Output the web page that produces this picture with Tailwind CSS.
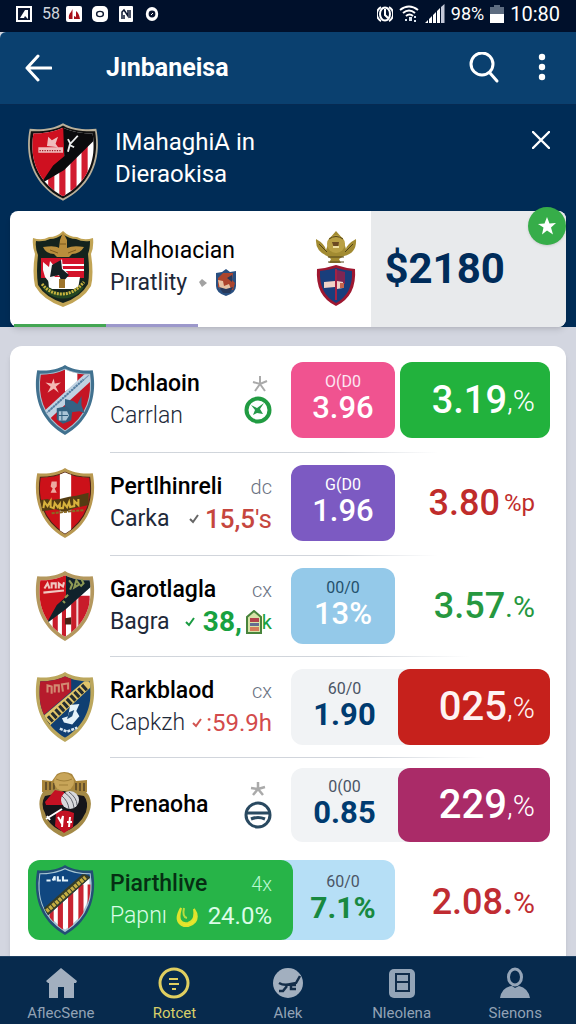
<!DOCTYPE html>
<html lang="en">
<head>
<meta charset="utf-8">
<meta name="viewport" content="width=device-width, initial-scale=1">
<title>Jınbaneisa</title>
<script src="https://cdn.jsdelivr.net/npm/@tailwindcss/browser@4"></script>
</head>
<body class="flex min-h-screen flex-col bg-[#d3d6e0] font-['Roboto','Liberation_Sans',sans-serif] text-black">

<svg class="absolute size-0" aria-hidden="true">
  <defs>
    <path id="shield" d="M30 1C38 6 48 7 57 6C61 27 57 54 30 69C3 54-1 27 3 6C12 7 22 6 30 1Z"/>
    <clipPath id="inner"><path d="M30 5C38 9 46 10 54 10C57 29 53 51 30 65C7 51 3 29 6 10C14 10 22 9 30 5Z"/></clipPath>
  </defs>
</svg>

<!-- Status bar -->
<div class="flex h-8 items-center justify-between bg-[#00102b] px-4 pb-1 text-white">
  <div class="flex items-center gap-2.5">
    <svg class="size-4" viewBox="0 0 16 16"><rect width="16" height="16" fill="#fff"/><rect x="2" y="2" width="12" height="12" fill="#0b1630"/><path d="M4 12l5-8h3v9l-3-3-1 2z" fill="#fff"/></svg>
    <span class="text-base leading-none text-gray-300">58</span>
    <svg class="-ml-1 size-4" viewBox="0 0 16 16"><rect width="16" height="16" rx="2" fill="#fff"/><path d="M6.500 3v10H3q-1-4 2-7zM8 3v7l2 1V5q3 2 4 8H8z" fill="#a80d18"/></svg>
    <svg class="size-4" viewBox="0 0 16 16"><rect width="16" height="16" rx="5" fill="#fff"/><ellipse cx="8" cy="8" rx="3.400" ry="2.600" fill="none" stroke="#111c33" stroke-width="1.400"/></svg>
    <svg class="size-4" viewBox="0 0 16 16"><rect x="1" width="14" height="16" rx="1" fill="#fff"/><path d="M4 13V6l2-2 4 6V4M12 4v8M6 9v4" fill="none" stroke="#0b1630" stroke-width="1.500"/></svg>
    <svg class="size-4" viewBox="0 0 16 16"><ellipse cx="8" cy="8" rx="6.200" ry="7" fill="#fff"/><circle cx="8" cy="8" r="3.400" fill="#0b1630"/><path d="M7 9l2-2" stroke="#fff"/></svg>
  </div>
  <div class="flex items-center gap-1.5">
    <svg class="size-4" viewBox="0 0 16 16"><path d="M4 1a8 8 0 0 0 0 14M12 1a8 8 0 0 1 0 14" fill="none" stroke="#fff" stroke-width="2"/><ellipse cx="8" cy="8" rx="5" ry="6.500" fill="none" stroke="#fff" stroke-width="2"/><path d="M8 3v6l3 3" stroke="#fff" stroke-width="2" fill="none"/></svg>
    <svg class="h-5 w-5" viewBox="0 0 20 20"><path d="M1 6q9-7 18 0M4 9q6-5 12 0M7 12q3.500-3 7 0" fill="none" stroke="#fff" stroke-width="2"/><path d="M6 15h2v2H6zM10 13h3v4h-3zM15 12h2v2h-2zM15 16h2v2h-2z" fill="#dbe4ee"/></svg>
    <svg class="h-5 w-5" viewBox="0 0 20 20"><path d="M0 19l3-3v3zM4 19v-4l3-3v7zM8 19v-8l3-3v11zM12 19V7l3-3v15z" fill="#fff"/><path d="M16 3l3.500-3v19H16z" fill="#c3c8d8"/></svg>
    <span class="text-lg leading-none">98%</span>
    <svg class="h-5 w-3.5" viewBox="0 0 14 20"><path d="M4 1h6v2h4v8H0V3h4z" fill="#5d6c80"/><path d="M0 10h14v9H0z" fill="#fff"/></svg>
    <span class="text-xl leading-none">10:80</span>
  </div>
</div>

<!-- App bar -->
<header class="flex h-[73px] items-center rounded-tl-md border-b border-[#062a52] bg-[#0a406f] px-4 text-white">
  <button class="p-2" aria-label="Back"><svg class="size-7" viewBox="0 0 28 28" fill="none" stroke="currentColor" stroke-width="3" stroke-linecap="round" stroke-linejoin="round"><path d="M27 14H3M14 2L3 14l11 12"/></svg></button>
  <h1 class="ml-[46px] flex-1 text-[25px] font-bold leading-8">Jınbaneisa</h1>
  <button class="p-1" aria-label="Search"><svg class="size-8" viewBox="0 0 32 32" fill="none" stroke="currentColor" stroke-width="3" stroke-linecap="round"><circle cx="14" cy="12" r="11"/><path d="M22 21l7 8"/></svg></button>
  <button class="ml-6 mr-1 px-2" aria-label="More options"><svg class="h-8 w-3" viewBox="0 0 12 32" fill="currentColor"><circle cx="6" cy="5" r="3.200"/><circle cx="6" cy="15" r="3.200"/><circle cx="6" cy="25" r="3.200"/></svg></button>
</header>

<!-- Club heading and balance card -->
<section class="bg-[#002c56] px-2.5">
  <div class="flex h-[106px] items-center pl-4 pr-3 text-white">
    <svg class="mt-2 h-20 w-[74px] shrink-0" viewBox="0 0 60 70" preserveAspectRatio="none">
      <use href="#shield" fill="#b9b09a"/><path d="M30 3C38 8 47 8 56 8C59 28 55 53 30 67C5 53 1 28 4 8C13 8 22 8 30 3Z" fill="#111"/>
      <g clip-path="url(#inner)"><path d="M0 0h60v70H0z" fill="#fff"/><path d="M18 30h5v40h-5zM27 30h5v40h-5zM36 20h5v40h-5zM45 15h5v40h-5z" fill="#d21c2f"/><path d="M0 0h31v38L14 52 0 40z" fill="#cf1020"/><path d="M30 0h30v11L31 42 12 54 22 38 31 30z" fill="#0b0b0d"/></g>
      <path d="M10 22h20v5H10zM17 21l1-8 3 3 5-3-2 6 2 3z" fill="#f0bcbc"/><path d="M11 25h18" stroke="#9c1522" stroke-dasharray="1 1"/><path d="M34 15l2 4 6-7M36 18l-2 8M35 20l4 2" stroke="#eee" stroke-width="1.500" fill="none"/>
    </svg>
    <div class="ml-[15px] flex-1 text-[24px] leading-8">
      <h2>IMahaghiA in</h2>
      <p>Dieraokisa</p>
    </div>
    <button class="-mt-9 p-1" aria-label="Close"><svg class="size-[18px]" viewBox="0 0 18 18" stroke="currentColor" stroke-width="2.400" stroke-linecap="round"><path d="M1 1l16 16M17 1L1 17"/></svg></button>
  </div>

  <div class="relative flex h-[116px] rounded-lg bg-white shadow-md">
    <div class="flex flex-1 items-center pl-[21px]">
      <svg class="h-[78px] w-[64px] shrink-0" viewBox="0 0 64 78">
        <path d="M2 8q9 3 16-1 8 0 14-6 6 6 14 6 7 4 16 1 1 9-2 16 3 20 0 32-8 14-28 21Q12 70 4 56 1 42 4 24 1 16 2 8z" fill="#c1a455"/>
        <path d="M5 11q8 1 14-2 7 0 13-5 6 5 13 5 6 3 14 2 0 8-2 13 2 18 0 30-7 13-25 19Q14 67 7 55 5 42 7 25 4 18 5 11z" fill="#14231d"/>
        <path d="M10 28h43v20H10z" fill="#d3132a"/><path d="M28 34h25v2H28zM28 39h25v2H28zM17 47h32l-2 12H18z" fill="#fff"/>
        <path d="M12 32l6 5 1-6 5 6 7-8 1 10 5 4-4 4-8-2-7 7-4-5-2-7z" fill="#f8f8f8"/><path d="M21 35l9-5 1 9 7 6-7 8-3-8-9 2z" fill="#142022"/><path d="M28 49h6v9h-6z" fill="#9d742b"/>
        <path d="M11 57q8-1 12 4 9 3 18 0 5-5 12-4-4 7-12 10-9 3-18 0-8-3-12-10z" fill="#244622"/><path d="M11 54q8 10 20 10t22-12" fill="none" stroke="#c7b23e" stroke-width="3" stroke-dasharray="2 1"/>
        <path d="M12 17q12-2 16 1l1-8 3-8 4 8v8q6-3 17-1-4 7-12 7l-3 3H26l-3-3q-8 0-11-7z" fill="#b98e3c"/><path d="M19 20l8 3M45 20l-8 3M29 14h6" stroke="#7c5a1c"/>
      </svg>
      <div class="ml-[15px] text-[23px] leading-8">
        <p class="-mt-1">Malhoıacian</p>
        <p class="flex items-center text-gray-800">Pıratlity
          <svg class="ml-3 size-2" viewBox="0 0 8 8"><path d="M0 3l3-3 5 4-5 4z" fill="#a2a2a2"/></svg>
          <svg class="ml-2 h-7 w-[22px]" viewBox="0 0 22 28"><path d="M1 4l6-1 4-3 4 3 6-1v15q0 7-10 10Q1 24 1 17z" fill="#294f80"/><path d="M8 4h10l-1 7 3 3-2 7H7l-4-3V9z" fill="#ac452d"/><path d="M3 11l5 1 1 5 5-2 2 5H5z" fill="#e6c2a2"/><path d="M12 9l5-3v7zM4 18l7 2 7-2-3 6H8z" fill="#27395b"/></svg>
        </p>
      </div>
      <svg class="ml-auto mr-3.5 h-[76px] w-[42px] shrink-0" viewBox="0 0 42 76">
        <path d="M1 8q9 5 10 11l4-12 6-7 7 8 3 10Q32 13 41 8q1 14-12 17l-5 3 2 4H14l2-4-4-3Q0 20 1 8z" fill="#a28b32"/><circle cx="21" cy="13" r="9" fill="#b9a044"/><path d="M14 8q7-5 14 0M4 13l8 8M38 13l-8 8M13 26h16M13 31h16" stroke="#534418" fill="none"/><path d="M17 11h7l-1 6h-4z" fill="#6b4a22"/><path d="M18 16h6" stroke="#efe0a0" stroke-width="2"/>
        <path d="M2 38q10-1 19-4 9 3 19 4 2 27-19 37Q0 65 2 38z" fill="#9e1730"/><path d="M5 40q9-1 16-3 7 2 16 3 1 23-16 32Q4 63 5 40z" fill="#193e7c"/><path d="M20 38h2v31h-2z" fill="#a42243"/><path d="M22 39l8 2v12h-8z" fill="#7e2553"/><path d="M9 51l11-1v6l-11 1zM22 50l6 1v6l-6 1z" fill="#efd3c8"/><path d="M25 52h4v5h-4z" fill="#c6654c"/>
      </svg>
    </div>
    <div class="flex w-[35%] items-center rounded-r-lg bg-[#e8eaec] pl-[13px] text-[42px] font-bold leading-none text-[#002c5a]">$2180</div>
    <div class="absolute bottom-0 left-1 flex h-[3px] w-[184px]"><span class="flex-1 bg-[#43a653]"></span><span class="flex-1 bg-[#9c98cb]"></span></div>
    <button class="absolute -top-1 right-0 flex size-[38px] items-center justify-center rounded-full bg-[#36ad49] shadow" aria-label="Favourite"><svg class="size-5" viewBox="0 0 20 20" fill="#fff"><path d="M10 1l2.500 6.500 6.500-.5-5 4.500 2 7-6-4-5 4 1.500-7L1 8l6.500-.5z"/></svg></button>
  </div>
</section>

<!-- Club list -->
<main class="mx-2.5 mt-[19px] flex-1 rounded-t-xl bg-white pl-[18px] pr-4 pt-4 shadow-md">
  <ul>
    <li class="flex h-[76px]">
      <div class="flex flex-1 items-center">
        <svg class="ml-1.5 h-[72px] w-[62px]" viewBox="0 0 60 70">
          <use href="#shield" fill="#41718f"/><path d="M30 5C38 9 46 10 54 10C57 29 53 51 30 65C7 51 3 29 6 10C14 10 22 9 30 5Z" fill="#c51524" stroke="#a4c0cf"/>
          <g clip-path="url(#inner)"><path d="M30 0h12v18l-12 9z" fill="#fff"/><path d="M3 52L51 8l8 2v3L11 57z" fill="#bfd2e2"/><path d="M6 53L53 11" stroke="#7091b0"/><path d="M14 46l34-31" stroke="#557fa2" stroke-width="2" stroke-dasharray="2 1"/></g>
          <path d="M19 14l1 5 6-1-5 4 3 6-5-4-6 4 3-6-5-4 6 1z" fill="#f4b8b3"/><path d="M30 34l8 2 4 3 4-8v9l3 8-5-2-8 1-6-6z" fill="#346385"/><path d="M22 43l9-2 6 5-1 9-8 3-6-4z" fill="#31607f"/><path d="M24 46h8l2 4-3 5h-7z" fill="#a9c5d7"/><path d="M27 46v9M24 50h9" stroke="#31607f"/>
        </svg>
        <div class="ml-3.5 mr-[19px] flex-1 text-[23px] leading-8">
          <div class="flex items-center justify-between"><h3 class="font-medium">Dchlaoin</h3><svg class="mr-1 size-4" viewBox="0 0 16 16" stroke="#aaa" stroke-width="2"><path d="M8 0v8L1 6m7 2l7-3M8 8l-5 7m5-7l5 7" fill="none"/></svg></div>
          <div class="flex items-center justify-between text-gray-800"><p class="font-light">Carrlan</p><svg class="-mt-3 size-7" viewBox="0 0 28 28"><circle cx="14" cy="14" r="11.500" fill="#fff" stroke="#219b42" stroke-width="4"/><path d="M7 9l6 3 7-5-4 6 3 5-6-1-4 2 2-5z" fill="#26994a"/></svg></div>
        </div>
      </div>
      <div class="flex w-[104px] flex-col items-center justify-center rounded-xl bg-[#f05390] text-white"><span class="text-base leading-4 text-pink-100">O(D0</span><strong class="text-[31px] font-medium leading-9">3.96</strong></div>
      <div class="ml-[5px] flex w-[150px] items-center justify-end rounded-xl bg-[#22b23d] pr-[15px] text-[38px] font-medium text-white">3.19<span class="text-[30px] font-light">,%</span></div>
    </li>
    <li class="ml-[82px] mr-28 mt-3.5 mb-3 h-px bg-linear-to-r from-gray-300 from-70% to-transparent" role="separator"></li>

    <li class="flex h-[76px]">
      <div class="flex flex-1 items-center">
        <svg class="ml-1.5 h-[72px] w-[62px]" viewBox="0 0 60 70">
          <use href="#shield" fill="#b89850"/><path d="M30 5C38 9 46 10 54 10C57 29 53 51 30 65C7 51 3 29 6 10C14 10 22 9 30 5Z" fill="#cc1119" stroke="#492116"/>
          <g clip-path="url(#inner)"><path d="M25 0h11v70H25z" fill="#fff"/></g><path d="M17 14h5v5l-2 2 2 4h-6l2-4-2-2z" fill="#edaaa0"/>
          <path d="M6 32l7-1 3 1 9-1 9-2 7-1 12-3v12l-14 3-9 4-9-3-13 2z" fill="#543c12"/><path d="M9 40l1-6 3 4 3-5v6l3 1 1-5 3 4 2-3v4h3l1-5 3 4 2-5 1 5 4-1v-5l4 4v-6" fill="none" stroke="#d8b13c" stroke-width="2"/><path d="M17 45l19-2 12-1" stroke="#8a6a24" stroke-width="2" stroke-dasharray="3 1"/>
        </svg>
        <div class="ml-3.5 mr-[19px] flex-1 text-[23px] leading-8">
          <div class="flex items-center justify-between"><h3 class="font-medium">Pertlhinreli</h3><span class="text-xl font-light text-gray-500">dc</span></div>
          <div class="flex items-center justify-between text-gray-800"><p>Carka</p><svg class="ml-auto mr-1.5 size-2.5" viewBox="0 0 10 10" fill="none" stroke="#666" stroke-width="2"><path d="M1 5l3 3 5-7"/></svg><span class="text-[26px] text-[#c6463e]"><b class="font-medium">15,5</b>'s</span></div>
        </div>
      </div>
      <div class="flex w-[104px] flex-col items-center justify-center rounded-xl bg-[#7c5ac2] text-white"><span class="text-base leading-4">G(D0</span><strong class="text-[31px] font-medium leading-9">1.96</strong></div>
      <div class="ml-[5px] flex w-[150px] items-center justify-end gap-1 pr-[15px] text-[36px] font-medium text-[#c02c2b]">3.80<span class="text-[24px] font-normal">%p</span></div>
    </li>
    <li class="ml-[82px] mr-28 mt-3.5 mb-3 h-px bg-linear-to-r from-gray-300 from-70% to-transparent" role="separator"></li>

    <li class="flex h-[76px]">
      <div class="flex flex-1 items-center">
        <svg class="ml-1.5 h-[72px] w-[62px]" viewBox="0 0 60 70">
          <use href="#shield" fill="#b4985e"/><g clip-path="url(#inner)"><path d="M0 0h60v70H0z" fill="#fff"/><path d="M18 34h5v40h-5zM27 30h4v40h-4zM36 25h18v25L36 68z" fill="#c81c2a"/><path d="M41 20h2v45h-2z" fill="#f1d6d6"/><path d="M0 0h31v30L13 50 0 45z" fill="#cb131d"/><path d="M31 0h29v12L31 38 12 52 22 34 31 26z" fill="#10222b"/></g>
          <path d="M10 18l3-5 2 5m2 0v-5h4v5m3 0v-5l4 3 1-4M9 22l20-2" fill="none" stroke="#f0c8c1" stroke-width="2"/><path d="M34 10l3 4-2 5m6-9l3 4-5 3zM46 9l2 4-3 3M30 27l3-3m-5 6l2 2" stroke="#8e9b55" stroke-width="2" fill="none"/><path d="M30 47l6-1v7h-6z" fill="#492013"/>
        </svg>
        <div class="ml-3.5 mr-[19px] flex-1 text-[23px] leading-8">
          <div class="flex items-center justify-between"><h3 class="font-medium">Garotlagla</h3><span class="text-xl font-light text-gray-500">cx</span></div>
          <div class="flex items-center text-gray-800"><p>Bagra</p><svg class="ml-auto mr-2 size-2.5" viewBox="0 0 10 10" fill="none" stroke="#1a9b42" stroke-width="2"><path d="M1 5l3 3 5-7"/></svg><b class="text-[28px] font-bold text-[#18a140]">38,</b><svg class="ml-1 h-6 w-4" viewBox="0 0 16 24"><path d="M1 23V7l7-6 7 6v16z" fill="#d7e3a7" stroke="#48843c" stroke-width="2"/><path d="M4 8h9v4H4z" fill="#b2414a"/><path d="M4 13h9v3H4z" fill="#666c92"/><path d="M4 17h9v4H4z" fill="#d47b5b"/></svg><span class="text-xl text-[#18a140]">k</span></div>
        </div>
      </div>
      <div class="flex w-[104px] flex-col items-center justify-center rounded-xl bg-[#94c9e9] text-white"><span class="text-base leading-4 text-[#24516c]">00/0</span><strong class="text-[31px] font-medium leading-9">13%</strong></div>
      <div class="ml-[5px] flex w-[150px] items-center justify-end pr-[15px] text-[36px] font-medium text-[#26983f]">3.57<span class="text-[30px] font-normal">.%</span></div>
    </li>
    <li class="ml-[82px] mr-20 mt-3 mb-3 h-px bg-linear-to-r from-gray-300 from-70% to-transparent" role="separator"></li>

    <li class="flex h-[76px]">
      <div class="flex flex-1 items-center">
        <svg class="ml-1.5 h-[72px] w-[62px]" viewBox="0 0 60 70">
          <use href="#shield" fill="#bca75d"/><g clip-path="url(#inner)"><path d="M0 0h60v70H0z" fill="#103f72"/><path d="M0 0h36v20L8 44H0z" fill="#b61b2c"/><path d="M4 48L51 8l6 6L11 57z" fill="#e0c469"/><path d="M11 51l39-36" stroke="#242d31" stroke-width="7" stroke-dasharray="3 2"/></g>
          <path d="M13 21v-7l4 1v7m3-1v-7h4v7m4-1l-1-7 6-1v6" fill="none" stroke="#d28a72" stroke-width="2"/><path d="M35 33l9-1-3 7 3 5-7 8-8-2-2-4 6-2z" fill="#e5f2fa"/><path d="M34 40l5-2-2 6-5 3z" fill="#1e4b77"/><path d="M25 56l7 3 10-4" stroke="#d8e7f1" stroke-width="2.500" stroke-dasharray="3 1" fill="none"/>
        </svg>
        <div class="ml-3.5 mr-[19px] flex-1 text-[23px] leading-8">
          <div class="flex items-center justify-between"><h3 class="font-medium">Rarkblaod</h3><span class="text-xl font-light text-gray-500">cx</span></div>
          <div class="flex items-center text-gray-800"><p class="font-light">Capkzh</p><svg class="ml-auto mr-1 size-2.5" viewBox="0 0 10 10" fill="none" stroke="#d25450" stroke-width="2"><path d="M1 5l3 3 5-7"/></svg><span class="text-[24px] text-[#d34b4b]">:59.9h</span></div>
        </div>
      </div>
      <div class="flex rounded-xl bg-[#f1f3f5]">
        <div class="flex w-[107px] flex-col items-center justify-center text-[#003b70]"><span class="text-base leading-4 text-gray-600">60/0</span><strong class="text-[31px] font-bold leading-9">1.90</strong></div>
        <div class="flex w-[152px] items-center justify-end rounded-xl bg-[#c6211c] pr-[15px] text-[40px] font-medium text-red-50">025<span class="text-[30px] font-light">,%</span></div>
      </div>
    </li>
    <li class="ml-[82px] mr-16 mt-3 mb-2.5 h-px bg-linear-to-r from-gray-300 from-70% to-transparent" role="separator"></li>

    <li class="mb-[18px] flex h-[74px]">
      <div class="flex flex-1 items-center">
        <svg class="ml-2.5 mr-1 h-[66px] w-[54px]" viewBox="0 0 54 66">
          <path d="M4 20V8l10 1 5-7q7-4 15 0l4 7 11-1v12z" fill="#a9863c"/><path d="M8 10v8m4-8v8m4-7v8M38 11v8m4-8v8m4-8v8" stroke="#514226" stroke-width="1.500"/>
          <path d="M5 20q14-3 21-5 8 3 22 5 8 8 3 21-6 17-26 24Q5 56 3 41-1 29 5 20z" fill="#a48a47"/><path d="M7 24q11-2 19-5 8 3 20 5 5 6 2 16-6 14-22 20Q10 54 7 41 2 32 7 24z" fill="#15151a"/><path d="M7 30l10-12 9 2v13H8zM18 41q8-5 18 0l-1 14-9 6-9-7z" fill="#c31123"/><circle cx="32" cy="28" r="9" fill="#d8d9dc"/><path d="M27 21q8 5 9 15M31 20q8 6 8 13M24 24q6 5 7 13" stroke="#5f626b" fill="none"/><ellipse cx="26" cy="10" rx="10" ry="9" fill="#c8a559"/><path d="M18 7q8 4 16 0M21 13h9" stroke="#9f7e38" fill="none"/><path d="M8 47l16-10M9 44l3 4M20 45l3 5 2-6-1 11m8-10l-1 10m-2-5h5" stroke="#fff" stroke-width="2" fill="none"/>
        </svg>
        <div class="ml-3.5 mr-[19px] flex flex-1 items-center justify-between">
          <h3 class="text-[23px] font-medium">Prenaoha</h3>
          <div class="flex flex-col items-center gap-1"><svg class="size-4" viewBox="0 0 16 16" fill="none" stroke="#aaa" stroke-width="2.500"><path d="M8 1v7L1 7m7 1l7-2M8 8l-5 6m5-6l5 6"/></svg><svg class="size-7" viewBox="0 0 28 28" fill="none" stroke="#294960" stroke-width="3"><circle cx="14" cy="14" r="12"/><path d="M3 12h22M7 18q7-3 14 0"/></svg></div>
        </div>
      </div>
      <div class="flex rounded-xl bg-[#f1f3f5]">
        <div class="flex w-[107px] flex-col items-center justify-center text-[#003b70]"><span class="text-base leading-4 text-gray-600">0(00</span><strong class="text-[31px] font-bold leading-9">0.85</strong></div>
        <div class="flex w-[152px] items-center justify-end rounded-xl bg-[#aa2b68] pr-[15px] text-[40px] font-medium text-white">229<span class="text-[30px] font-light">,%</span></div>
      </div>
    </li>

    <li class="mb-4 flex h-20">
      <div class="z-10 -mr-0.5 flex flex-1 items-center rounded-xl bg-[#27b448] pr-0.5">
        <svg class="ml-1.5 h-[72px] w-[62px]" viewBox="0 0 60 70">
          <use href="#shield" fill="#234f75"/><path d="M30 5C38 9 46 10 54 10C57 29 53 51 30 65C7 51 3 29 6 10C14 10 22 9 30 5Z" fill="#fff" stroke="#a9c7d4" stroke-width="2"/>
          <g clip-path="url(#inner)"><path d="M15 42h4v30h-4zM23 34h5v36h-5zM33 28h5v40h-5zM43 20h5v50h-5zM52 20h5v30h-5z" fill="#c82431"/><path d="M0 0h58v10L8 55 0 45z" fill="#104780"/><path d="M6 46L48 9l7 4L12 51z" fill="#343c28"/><path d="M12 46L50 13" stroke="#c4ae43" stroke-width="4" stroke-dasharray="3 1"/></g><path d="M12 16h4m2 0l2-4v4m3-4v4h3m2-4v4h5" stroke="#e4f4fb" stroke-width="2" fill="none"/>
        </svg>
        <div class="ml-3.5 mr-[19px] flex-1 text-[23px] leading-8">
          <div class="flex items-center justify-between"><h3 class="font-medium text-[#062e13]">Piarthlive</h3><span class="text-xl font-light text-green-200">4x</span></div>
          <div class="flex items-center justify-between text-green-100"><p class="font-light">Papnı</p><svg class="size-[22px]" viewBox="0 0 22 22"><path d="M5 3Q0 20 12 18q8-2 6-14 5 7 1 13-4 5-11 4Q-3 17 5 3z" fill="#eee72b" stroke="#dfe32d" stroke-width="2"/><path d="M8 3q-2 9 3 10" fill="none" stroke="#b7dc3f" stroke-width="2"/></svg><span class="text-[24px]">24.0%</span></div>
        </div>
      </div>
      <div class="-ml-2 flex w-28 flex-col items-center justify-center rounded-r-xl bg-[#b6dff6] pl-2 text-[#188940]"><span class="text-base leading-4 text-gray-600">60/0</span><strong class="text-[30px] font-bold leading-9">7.1%</strong></div>
      <div class="ml-[5px] flex w-[150px] items-center justify-end pr-[15px] pt-1 text-[36px] font-medium text-[#c02c32]">2.08.<span class="text-[30px] font-normal">%</span></div>
    </li>
  </ul>
</main>

<!-- Bottom navigation -->
<nav class="z-10 grid h-[68px] grid-cols-5 border-t border-[#1f4061] bg-[#072a4d] px-1 pt-2.5 text-[15px] leading-5 text-[#92a2b5]">
  <a href="#" class="flex flex-col items-center gap-1"><svg class="size-8" viewBox="0 0 32 32" fill="#a2afbf"><path d="M16 1L1 14l2 2h1v15h9V20h6v11h10V16h2l1-2z"/></svg>AflecSene</a>
  <a href="#" class="flex flex-col items-center gap-1 text-[#d8cf69]" aria-current="page"><svg class="size-8" viewBox="0 0 32 32" fill="none" stroke="#dfce60"><circle cx="16" cy="16" r="14" stroke-width="3"/><path d="M11 12h9M11 17h10M14 22h4" stroke-width="2"/></svg>Rotcet</a>
  <a href="#" class="flex flex-col items-center gap-1"><svg class="size-8" viewBox="0 0 32 32"><circle cx="16" cy="16" r="15" fill="#a2afbf"/><path d="M7 16q5 3 12 1l5-1 4-7M7 24h4l4-5M24 18h-5v4h5" fill="none" stroke="#142d49" stroke-width="2.500"/></svg>Alek</a>
  <a href="#" class="flex flex-col items-center gap-1"><svg class="size-8" viewBox="0 0 32 32"><rect x="3" y="2" width="26" height="29" rx="5" fill="#93a4b7"/><path d="M10 7h13v17H10zM10 15h13" fill="none" stroke="#102c4a" stroke-width="2"/></svg>Nleolena</a>
  <a href="#" class="flex flex-col items-center gap-1"><svg class="size-8" viewBox="0 0 32 32"><ellipse cx="16" cy="10" rx="6.500" ry="8" fill="none" stroke="#95a5b8" stroke-width="3"/><path d="M1 31q2-11 12-12l3 2 4-2q9 2 11 12z" fill="#95a5b8"/></svg>Sienons</a>
</nav>
</body>
</html>
